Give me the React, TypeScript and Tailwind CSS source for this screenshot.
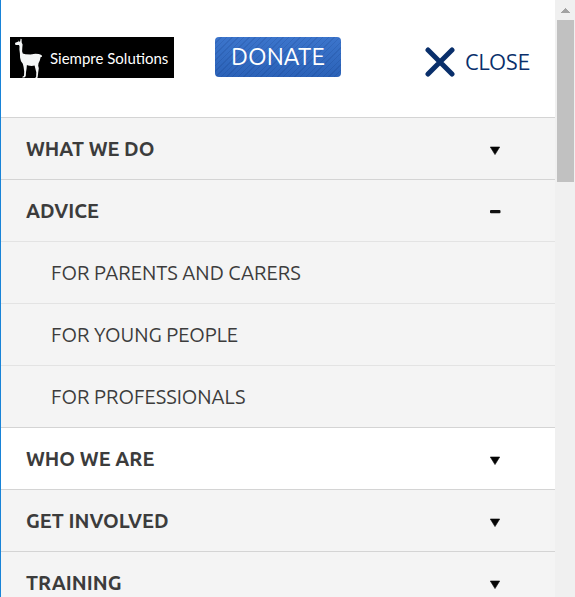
import { useState } from "react";

type Section = { label: string; children?: string[]; light?: boolean };

const sections: Section[] = [
  { label: "WHAT WE DO" },
  {
    label: "ADVICE",
    children: ["FOR PARENTS AND CARERS", "FOR YOUNG PEOPLE", "FOR PROFESSIONALS"],
  },
  { label: "WHO WE ARE", light: true },
  { label: "GET INVOLVED" },
  { label: "TRAINING" },
];

function Llama() {
  return (
    <svg viewBox="0 0 32 41" className="h-[41px] w-8 shrink-0" fill="#f4f6f6" aria-hidden="true">
      <path d="M7.4 2.2l1.5 2.6 1.2-.2.5-2.8 1 .3.1 3.3.9 2-.3 3.4-.2 3.4.7 2.3 2.6.8 5 .3 5-.9 3.4.4 2.6.9.9 1.6-1.6.4-.9 3.4-1.3 2.8-.3 2.6.6 2.5-.6 4.2-.5 4.6-.6 1.3-2.2.5.3-1.1.9-.8.2-4.7-.9-3.5-.8-3.2-3 .3-3.4-.5-1.3-.3-.3 3.4-.6 3.7-.2 3.6-.5.9-1 .8-2 .1.2-.9 1.5-.9.2-4.3-.6-4.6-.8-3.2-1.8-2.5-.9-3.5-.2-4.2-.5-4 .1-3.1-.5-1.3-3-.1-1.1-.8.4-1.4 2.6-1.1.6-.9z" />
    </svg>
  );
}

function Marker({ open }: { open: boolean }) {
  return (
    <svg viewBox="0 0 12 14" className="h-3.5 w-3" aria-hidden="true">
      {open ? (
        <rect x="1" y="6" width="10.5" height="3.2" rx="1" fill="#111" />
      ) : (
        <path d="M1.3 5h9.4L6 12.6z" fill="#050505" stroke="#050505" strokeWidth=".6" />
      )}
    </svg>
  );
}

function ScrollRail() {
  return (
    <div className="flex w-5 shrink-0 flex-col items-center bg-[#f0f0f0]" aria-hidden="true">
      <div className="flex h-5 items-center">
        <svg viewBox="0 0 9 5" className="h-[5px] w-[9px]" fill="#a3a3a3" shapeRendering="crispEdges">
          <path d="M4 0h1v1h1v1h1v1h1v1h1v1H0V4h1V3h1V2h1V1h1z" />
        </svg>
      </div>
      <div className="h-[162px] w-[17px] bg-[#c1c1c1]" />
    </div>
  );
}

export default function App() {
  const [open, setOpen] = useState("ADVICE");

  return (
    <div className="flex h-screen overflow-hidden bg-white font-['Ubuntu','Noto_Sans',sans-serif] text-[#3c3c3c]">
      <div className="min-w-0 flex-1 overflow-hidden border-l border-[#1883d7]">
        <header className="flex h-[117px] items-start pt-[37px] pr-[25px] pl-[9px]">
          <a href="#home" className="flex h-[41px] w-[164px] items-center gap-2 overflow-hidden bg-black text-white">
            <Llama />
            <span className="font-['Lato',sans-serif] text-[15px] leading-5 whitespace-nowrap">Siempre Solutions</span>
          </a>
          <a
            href="#donate"
            className="ml-[41px] flex h-10 w-[126px] items-center justify-center rounded bg-[repeating-linear-gradient(135deg,#00206020_0_1px,transparent_1px_4px),linear-gradient(#3c75cc,#2b62b8)] text-2xl text-white"
          >
            DONATE
          </a>
          <button type="button" className="mt-2.5 ml-auto flex items-center gap-2.5 text-[22px] leading-[30px] text-[#092f6b]">
            <svg viewBox="0 0 30 30" className="size-[30px]" stroke="#092f6b" strokeWidth="5" strokeLinecap="round" aria-hidden="true">
              <path d="M3 3l24 24M27 3L3 27" />
            </svg>
            CLOSE
          </button>
        </header>
        <nav>
          <ul>
            {sections.map((section) => (
              <li key={section.label}>
                <button
                  type="button"
                  aria-expanded={open === section.label}
                  onClick={() => setOpen(open === section.label ? "" : section.label)}
                  className={`flex h-[62px] w-full items-center justify-between border-t border-[#d4d4d4] pr-[54px] pl-[25px] text-xl font-bold ${section.light ? "bg-white" : "bg-[#f4f4f4]"}`}
                >
                  {section.label}
                  <Marker open={open === section.label} />
                </button>
                {open === section.label && section.children && (
                  <ul>
                    {section.children.map((child) => (
                      <li key={child} className="border-t border-[#e3e3e3] bg-[#f4f4f4]">
                        <a href="#advice" className="flex h-[61px] items-center pl-[50px] text-xl">
                          {child}
                        </a>
                      </li>
                    ))}
                  </ul>
                )}
              </li>
            ))}
          </ul>
        </nav>
      </div>
      <ScrollRail />
    </div>
  );
}
